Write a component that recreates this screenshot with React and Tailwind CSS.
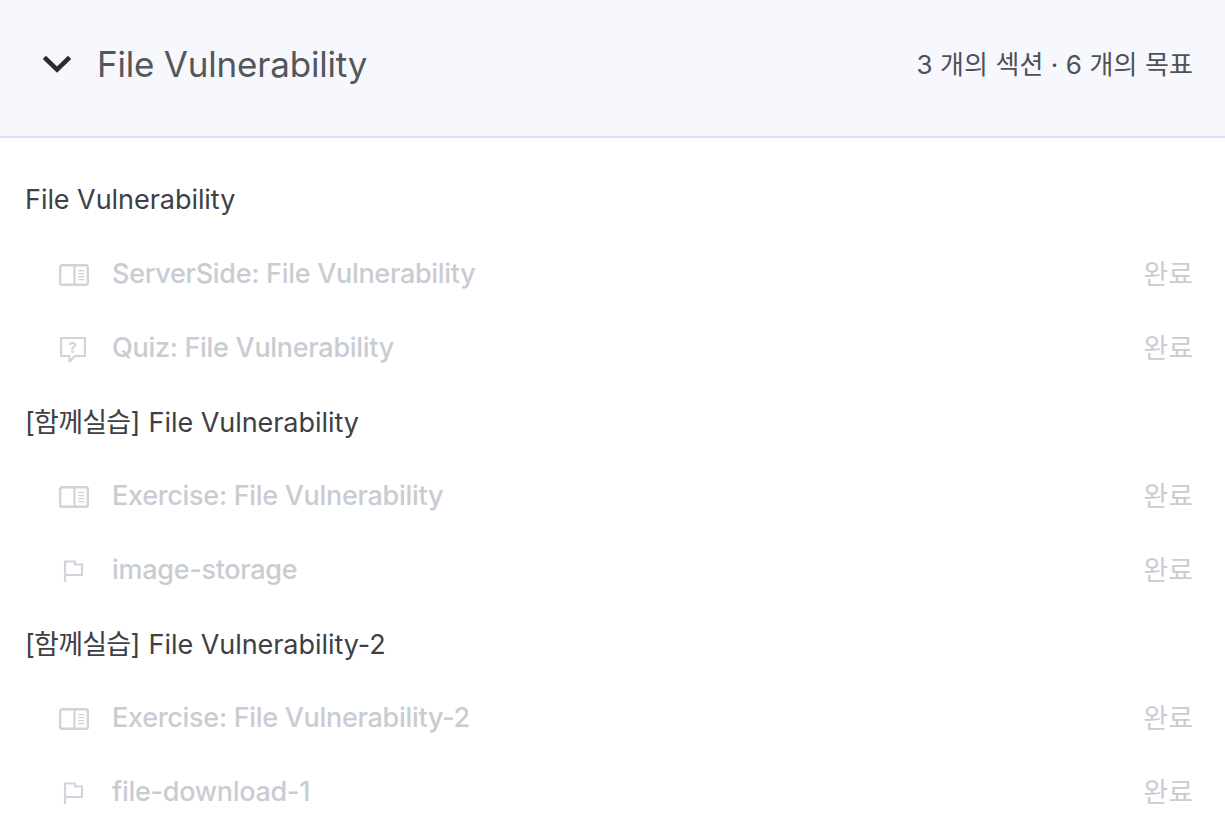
import React from 'react';

const FONT = 'font-["Inter","Noto_Sans_CJK_KR",sans-serif]';

const BookIcon = () => (
  <svg width="30" height="28" viewBox="0 0 30 28" fill="none" className="text-[#d0d3da]">
    <rect x="1.2" y="5.2" width="27.6" height="19.6" rx="1.8" stroke="currentColor" strokeWidth="2.4" />
    <path d="M15.5 5V25" stroke="currentColor" strokeWidth="2.2" />
    <path d="M19 10.6h6.4M19 13.6h6.4M19 16.6h6.4M19 19.6h6.4" stroke="currentColor" strokeWidth="1.4" />
  </svg>
);

const QuizIcon = () => (
  <svg width="30" height="32" viewBox="0 0 30 32" fill="none" className="text-[#d0d3da]">
    <path
      d="M2.1 6H25.9V24H16L10.5 29.5V24H2.1Z"
      stroke="currentColor"
      strokeWidth="2.2"
      strokeLinejoin="round"
    />
    <text x="13.7" y="20.6" textAnchor="middle" fontSize="15" fontWeight="700" fill="currentColor" fontFamily="Inter, sans-serif">?</text>
  </svg>
);

const FlagIcon = () => (
  <svg width="30" height="28" viewBox="0 0 30 28" fill="none" className="text-[#d0d3da]">
    <path d="M6 26V5.5H16V8.5H23V19H6" stroke="currentColor" strokeWidth="2.2" />
  </svg>
);

const icons = { book: BookIcon, quiz: QuizIcon, flag: FlagIcon };

const sections = [
  {
    title: 'File Vulnerability',
    items: [
      { icon: 'book', label: 'ServerSide: File Vulnerability' },
      { icon: 'quiz', label: 'Quiz: File Vulnerability' },
    ],
  },
  {
    prefix: '[함께실습]',
    title: 'File Vulnerability',
    items: [
      { icon: 'book', label: 'Exercise: File Vulnerability' },
      { icon: 'flag', label: 'image-storage' },
    ],
  },
  {
    prefix: '[함께실습]',
    title: 'File Vulnerability-2',
    items: [
      { icon: 'book', label: 'Exercise: File Vulnerability-2' },
      { icon: 'flag', label: 'file-download-1' },
    ],
  },
];

const Row = ({ icon, label }) => {
  const Icon = icons[icon];
  return (
    <div className="flex h-[74px] items-center pl-[59px] pr-[32px]">
      <div className="flex w-[30px] items-center justify-center">
        <Icon />
      </div>
      <span className="ml-[23px] text-[27px] font-medium tracking-[-0.3px] text-[#c9ccd3]">{label}</span>
      <span className="ml-auto pt-[2px] text-[27px] text-[#c9ccd3]">완료</span>
    </div>
  );
};

export default function App() {
  return (
    <div className={`${FONT} h-[833px] w-[1225px] overflow-hidden bg-white`}>
      <div className="flex h-[138px] items-center justify-between border-b-2 border-[#dcdefa] bg-[#f7f8fe] pb-[8px] pl-[43px] pr-[32px]">
        <div className="flex items-center">
          <svg width="28" height="18" viewBox="0 0 28 18" fill="none">
            <path d="M1.4 2.4L14 14.6L26.6 2.4" stroke="#2b2b2b" strokeWidth="4.6" />
          </svg>
          <h2 className="ml-[26px] text-[35px] font-normal tracking-[-0.2px] text-[#55565a]">File Vulnerability</h2>
        </div>
        <span className="tracking-[0.1px] text-[26px] text-[#4f5155]">3 개의 섹션 · 6 개의 목표</span>
      </div>
      <div className="pt-[25px]">
        {sections.map((section) => (
          <div key={section.prefix + section.title}>
            {section.prefix ? (
              <div className="flex h-[74px] items-center pl-[25px] pt-[2px] text-[27px] tracking-[-0.05px] text-[#3e4045]">
                <span className="tracking-[-0.75px]">{section.prefix}</span>
                <span className="ml-[9px]">{section.title}</span>
              </div>
            ) : (
              <div className="flex h-[74px] items-center pl-[25px] text-[27px] tracking-[-0.05px] text-[#3e4045]">{section.title}</div>
            )}
            {section.items.map((item) => (
              <Row key={item.label} {...item} />
            ))}
          </div>
        ))}
      </div>
    </div>
  );
}
